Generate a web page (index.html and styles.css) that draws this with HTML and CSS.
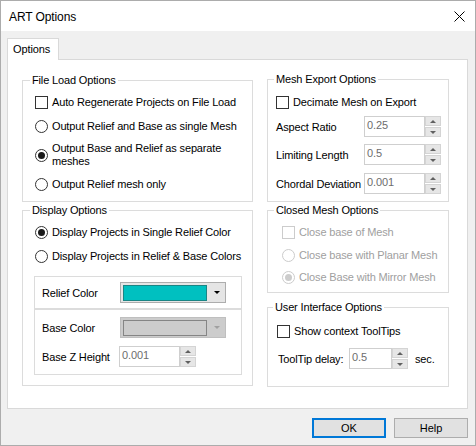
FILE: index.html
```html
<!DOCTYPE html>
<html lang="en">
<head>
<meta charset="utf-8">
<title>ART Options</title>
<link rel="stylesheet" href="styles.css">
</head>
<body>
<div class="window">
  <div class="titlebar">
    <span class="title">ART Options</span>
    <span class="close">
      <svg width="11" height="11" viewBox="0 0 11 11"><path d="M0.5 0.5 L10.5 10.5 M10.5 0.5 L0.5 10.5" stroke="#000" stroke-width="1" fill="none"/></svg>
    </span>
  </div>
  <div class="client">
    <div class="tabs"><div class="tab">Options</div></div>
    <div class="panel">
      <div class="col col-left">
        <section class="group g-fileload">
          <div class="gtitle">File Load Options</div>
          <div class="gbody">
            <div class="opt"><span class="chk"></span><span class="lbl">Auto Regenerate Projects on File Load</span></div>
            <div class="opt"><span class="radio"></span><span class="lbl">Output Relief and Base as single Mesh</span></div>
            <div class="opt two"><span class="radio on"></span><span class="lbl">Output Base and Relief as separate<br>meshes</span></div>
            <div class="opt"><span class="radio"></span><span class="lbl">Output Relief mesh only</span></div>
          </div>
        </section>
        <section class="group g-display">
          <div class="gtitle">Display Options</div>
          <div class="gbody">
            <div class="opt"><span class="radio on"></span><span class="lbl">Display Projects in Single Relief Color</span></div>
            <div class="opt"><span class="radio"></span><span class="lbl">Display Projects in Relief &amp; Base Colors</span></div>
            <div class="frame f-relief">
              <div class="frow">
                <span class="flabel">Relief Color</span>
                <span class="combo"><span class="swatch"></span><span class="carrow"></span></span>
              </div>
            </div>
            <div class="frame f-base">
              <div class="frow">
                <span class="flabel">Base Color</span>
                <span class="combo disabled"><span class="swatch"></span><span class="carrow"></span></span>
              </div>
              <div class="frow r-z">
                <span class="flabel z">Base Z Height</span>
                <span class="spin w61"><span class="edit">0.001</span><span class="btns"><span class="sb up"></span><span class="sb down"></span></span></span>
              </div>
            </div>
          </div>
        </section>
      </div>
      <div class="col col-right">
        <section class="group g-mesh">
          <div class="gtitle">Mesh Export Options</div>
          <div class="gbody">
            <div class="opt"><span class="chk"></span><span class="lbl">Decimate Mesh on Export</span></div>
            <div class="frow m1"><span class="mlabel">Aspect Ratio</span><span class="spin w61"><span class="edit">0.25</span><span class="btns"><span class="sb up"></span><span class="sb down"></span></span></span></div>
            <div class="frow m2"><span class="mlabel">Limiting Length</span><span class="spin w61"><span class="edit">0.5</span><span class="btns"><span class="sb up"></span><span class="sb down"></span></span></span></div>
            <div class="frow m3"><span class="mlabel">Chordal Deviation</span><span class="spin w61"><span class="edit">0.001</span><span class="btns"><span class="sb up"></span><span class="sb down"></span></span></span></div>
          </div>
        </section>
        <section class="group g-closed">
          <div class="gtitle">Closed Mesh Options</div>
          <div class="gbody">
            <div class="opt dis"><span class="chk"></span><span class="lbl">Close base of Mesh</span></div>
            <div class="opt dis c2"><span class="radio"></span><span class="lbl">Close base with Planar Mesh</span></div>
            <div class="opt dis c3"><span class="radio on"></span><span class="lbl">Close Base with Mirror Mesh</span></div>
          </div>
        </section>
        <section class="group g-ui">
          <div class="gtitle">User Interface Options</div>
          <div class="gbody">
            <div class="opt"><span class="chk"></span><span class="lbl">Show context ToolTips</span></div>
            <div class="frow u2"><span class="ulabel">ToolTip delay:</span><span class="spin w43"><span class="edit">0.5</span><span class="btns"><span class="sb up"></span><span class="sb down"></span></span></span><span class="sec">sec.</span></div>
          </div>
        </section>
      </div>
    </div>
    <div class="buttons">
      <button class="btn default">OK</button>
      <button class="btn">Help</button>
    </div>
  </div>
</div>
</body>
</html>
```
FILE: styles.css
```css
* { box-sizing: border-box; }
html, body { margin: 0; padding: 0; }
body {
  width: 476px;
  height: 446px;
  font-family: "Liberation Sans", Arial, sans-serif;
  font-size: 11px;
  color: #000;
  background: #f0f0f0;
  overflow: hidden;
}
.window {
  width: 476px;
  height: 446px;
  border: 1px solid #acacac;
  background: #f0f0f0;
  display: flex;
  flex-direction: column;
}
.titlebar {
  height: 30px;
  flex: none;
  background: #fff;
  display: flex;
  align-items: center;
  justify-content: space-between;
  padding: 0 10px 0 8px;
}
.title { font-size: 12px; letter-spacing: -0.1px; padding-top: 1px; }
.close { display: flex; width: 11px; height: 11px; }
.client {
  flex: 1;
  padding: 7px 0 0 6px;
  display: flex;
  flex-direction: column;
}
.tabs { display: flex; height: 21px; }
.tab {
  position: relative;
  z-index: 1;
  width: 52px;
  height: 22px;
  background: #fff;
  border: 1px solid #d9d9d9;
  border-bottom: none;
  padding: 3px 0 0 5px;
  line-height: 14px;
  letter-spacing: -0.1px;
}
.panel {
  width: 461px;
  height: 350px;
  background: #fff;
  border: 1px solid #d9d9d9;
  padding: 12px 0 0 14px;
  display: flex;
  gap: 14px;
  align-items: flex-start;
}
.col { display: flex; flex-direction: column; }
.col-left { width: 231px; padding-top: 8px; }
.col-right { width: 182px; padding-top: 7px; }

.group {
  border: 1px solid #dcdcdc;
  display: flex;
  flex-direction: column;
}
.gtitle {
  align-self: flex-start;
  margin: -8px 0 0 0;
  padding: 0 2px;
  background: #fff;
  line-height: 14px;
  letter-spacing: -0.15px;
}
.gbody { display: flex; flex-direction: column; }
.g-fileload { padding: 0 8px 9px 12px; }
.g-fileload .gtitle { margin-left: -5px; }
.g-fileload .gbody { gap: 8px; margin-top: 7px; }
.g-display { margin-top: 8px; padding: 0 8px 10px 12px; }
.g-display .gtitle { margin-left: -5px; }
.g-display .gbody { gap: 8px; margin-top: 7px; }
.g-mesh { padding: 0 6px 7px 8px; }
.g-mesh .gtitle { margin-left: -2px; }
.g-mesh .gbody { margin-top: 8px; }
.g-closed { margin-top: 8px; padding: 0 6px 7px 14px; }
.g-closed .gtitle { margin-left: -8px; }
.g-closed .gbody { margin-top: 7px; }
.g-ui { margin-top: 14px; padding: 0 6px 17px 9px; }
.g-ui .gtitle { margin-left: -4px; }
.g-ui .gbody { margin-top: 9px; }

.opt {
  display: flex;
  align-items: center;
  height: 16px;
  letter-spacing: -0.15px;
}
.opt.two { height: 26px; }
.opt .lbl { line-height: 13px; margin-left: 4px; }
.opt.dis .lbl { color: #a0a0a0; }
.c2 { margin-top: 7px; }
.c3 { margin-top: 6px; }

.chk {
  flex: none;
  width: 13px;
  height: 13px;
  border: 1px solid #333;
  background: #fff;
}
.dis .chk { border-color: #cccccc; }
.radio {
  flex: none;
  width: 13px;
  height: 13px;
  border: 1px solid #333;
  border-radius: 50%;
  background: #fff;
  display: flex;
  align-items: center;
  justify-content: center;
}
.radio.on::after {
  content: "";
  width: 7px;
  height: 7px;
  border-radius: 50%;
  background: #1a1a1a;
}
.dis .radio { border-color: #cccccc; }
.dis .radio.on::after { background: #cccccc; }

.frame {
  width: 208px;
  margin-left: -1px;
  border: 1px solid #dcdcdc;
  display: flex;
  flex-direction: column;
}
.f-relief { margin-top: 4px; padding: 5px 0 5px 7px; }
.f-base { margin-top: -8px; padding: 7px 0 7px 7px; }
.frow { display: flex; align-items: center; height: 21px; letter-spacing: -0.15px; }
.r-z { margin-top: 8px; }
.flabel { width: 78px; flex: none; }
.flabel.z { width: 77px; }

.combo {
  width: 106px;
  height: 21px;
  background: #e5e5e5;
  border: 1px solid #adadad;
  display: flex;
  align-items: center;
  padding: 0 0 0 2px;
}
.swatch {
  width: 84px;
  height: 16px;
  background: #00c0c0;
  border: 1px solid #1b8585;
}
.carrow {
  width: 0;
  height: 0;
  margin-left: 7px;
  border-left: 3px solid transparent;
  border-right: 3px solid transparent;
  border-top: 3px solid #000;
}
.combo.disabled { background: #cccccc; border-color: #bfbfbf; }
.combo.disabled .swatch { background: #cccccc; border-color: #858585; }
.combo.disabled .carrow { border-top-color: #a0a0a0; }

.spin { display: flex; height: 21px; flex: none; }
.edit {
  height: 21px;
  border: 1px solid #cfcfcf;
  background: #fff;
  color: #6d6d6d;
  padding: 0 0 0 2px;
  line-height: 17px;
  letter-spacing: -0.1px;
}
.w61 .edit { width: 61px; }
.w43 .edit { width: 43px; }
.btns {
  width: 16px;
  display: flex;
  flex-direction: column;
  gap: 1px;
}
.sb {
  flex: 1;
  background: #e6e6e6;
  border: 1px solid #d4d4d4;
  display: flex;
  align-items: center;
  justify-content: center;
}
.sb::after {
  content: "";
  width: 0;
  height: 0;
  border-left: 3px solid transparent;
  border-right: 3px solid transparent;
}
.sb.up::after { border-bottom: 3px solid #606060; }
.sb.down::after { border-top: 3px solid #606060; }

.mlabel { width: 88px; flex: none; }
.m1 { margin-top: 6px; }
.m2 { margin-top: 7px; }
.m3 { margin-top: 8px; }
.ulabel { width: 71px; flex: none; margin-left: 1px; }
.u2 { margin-top: 9px; }
.sec { margin-left: 7px; }

.buttons {
  width: 461px;
  display: flex;
  justify-content: flex-end;
  gap: 8px;
  margin-top: 9px;
}
.btn {
  width: 74px;
  height: 20px;
  margin: 0;
  padding: 0;
  font-family: "Liberation Sans", Arial, sans-serif;
  font-size: 11px;
  color: #000;
  background: #e1e1e1;
  border: 1px solid #adadad;
  border-radius: 0;
}
.btn.default { border: 2px solid #0078d7; }
```
